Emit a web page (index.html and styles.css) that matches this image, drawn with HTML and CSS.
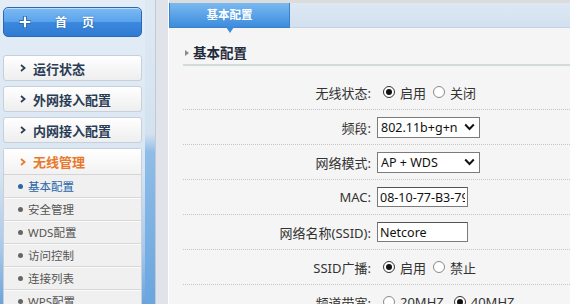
FILE: index.html
```html
<!DOCTYPE html>
<html lang="zh-CN">
<head>
<meta charset="utf-8">
<title>基本配置</title>
<link rel="stylesheet" href="styles.css">
</head>
<body>
<div class="page">
  <aside class="sidebar">
    <nav class="menu">
      <div class="home">
        <svg class="plus" width="12" height="12" viewBox="0 0 12 12"><path d="M6 1.5V10.5M1.5 6H10.5" stroke="#2a68b3" stroke-width="4.2" stroke-linecap="round" fill="none"/><path d="M6 1.5V10.5M1.5 6H10.5" stroke="#ffffff" stroke-width="2.2" stroke-linecap="round" fill="none"/></svg>
        <span class="home-text">首页</span>
      </div>
      <div class="item first"><svg class="chev" width="6" height="8" viewBox="0 0 6 8"><polyline points="1,1 4.6,4 1,7" fill="none" stroke="#2a3c55" stroke-width="1.7"/></svg>运行状态</div>
      <div class="item"><svg class="chev" width="6" height="8" viewBox="0 0 6 8"><polyline points="1,1 4.6,4 1,7" fill="none" stroke="#2a3c55" stroke-width="1.7"/></svg>外网接入配置</div>
      <div class="item"><svg class="chev" width="6" height="8" viewBox="0 0 6 8"><polyline points="1,1 4.6,4 1,7" fill="none" stroke="#2a3c55" stroke-width="1.7"/></svg>内网接入配置</div>
      <div class="group">
        <div class="group-head"><svg class="chev" width="6" height="8" viewBox="0 0 6 8"><polyline points="1,1 4.6,4 1,7" fill="none" stroke="#e9782a" stroke-width="1.7"/></svg>无线管理</div>
        <div class="sub active"><span class="dot"></span>基本配置</div>
        <div class="sub"><span class="dot"></span>安全管理</div>
        <div class="sub"><span class="dot"></span>WDS配置</div>
        <div class="sub"><span class="dot"></span>访问控制</div>
        <div class="sub"><span class="dot"></span>连接列表</div>
        <div class="sub"><span class="dot"></span>WPS配置</div>
      </div>
    </nav>
    <div class="edge"></div>
  </aside>
  <div class="divider"></div>
  <main class="content">
    <div class="tabbar"><div class="tab">基本配置</div></div>
    <section class="panel">
      <h2 class="heading"><span class="tri"></span>基本配置</h2>
      <div class="form">
        <div class="row">
          <div class="label">无线状态:</div>
          <div class="radios"><span class="radio on"></span><span class="opt">启用</span><span class="radio"></span><span class="opt">关闭</span></div>
        </div>
        <div class="row">
          <div class="label">频段:</div>
          <div class="select"><span>802.11b+g+n</span><svg width="11" height="8" viewBox="0 0 11 8"><polyline points="1.2,1.5 5.5,6 9.8,1.5" fill="none" stroke="#111" stroke-width="1.9"/></svg></div>
        </div>
        <div class="row">
          <div class="label">网络模式:</div>
          <div class="select"><span>AP + WDS</span><svg width="11" height="8" viewBox="0 0 11 8"><polyline points="1.2,1.5 5.5,6 9.8,1.5" fill="none" stroke="#111" stroke-width="1.9"/></svg></div>
        </div>
        <div class="row">
          <div class="label">MAC:</div>
          <div><input class="input" type="text" value="08-10-77-B3-79"></div>
        </div>
        <div class="row">
          <div class="label">网络名称(SSID):</div>
          <div><input class="input" type="text" value="Netcore"></div>
        </div>
        <div class="row">
          <div class="label">SSID广播:</div>
          <div class="radios"><span class="radio on"></span><span class="opt">启用</span><span class="radio"></span><span class="opt">禁止</span></div>
        </div>
        <div class="row">
          <div class="label">频道带宽:</div>
          <div class="radios"><span class="radio"></span><span class="opt wide">20MHZ</span><span class="radio on"></span><span class="opt">40MHZ</span></div>
        </div>
      </div>
    </section>
  </main>
</div>
</body>
</html>
```

FILE: styles.css
```css
html, body {
  margin: 0;
  padding: 0;
}
body {
  width: 570px;
  height: 304px;
  overflow: hidden;
  font-family: "Noto Sans", "Noto Sans CJK SC", sans-serif;
  background: #f5f5f5;
}
.page {
  display: flex;
  height: 304px;
}

/* sidebar */
.sidebar {
  width: 155px;
  flex: none;
  display: flex;
  background: linear-gradient(to bottom, #e4edf6 0%, #d9e6f2 55%, #a9c9e9 82%, #6aa3db 100%);
}
.menu {
  width: 139px;
  margin-left: 3px;
  display: flex;
  flex-direction: column;
}
.edge {
  flex: 1;
  margin-left: 3px;
  background: linear-gradient(to bottom, #dfe9f4 0%, #d3e2f0 44%, #8fbde7 50%, #6aa5df 100%);
}
.home {
  margin-top: 7px;
  height: 30px;
  flex: none;
  box-sizing: border-box;
  border: 1px solid #2a68b3;
  border-radius: 5px;
  background: linear-gradient(to bottom, #7cbaf2 0%, #5ba4ec 48%, #3b89de 52%, #2f7bd2 100%);
  box-shadow: inset 0 1px 0 rgba(255,255,255,0.5);
  display: flex;
  align-items: center;
  padding-left: 15px;
  color: #fff;
  font-weight: bold;
  font-size: 12px;
}
.plus {
  flex: none;
}
.home-text {
  margin-left: 24px;
  letter-spacing: 15px;
  text-shadow: 0 0 2px rgba(20,70,140,0.6);
}
.item {
  margin-top: 5px;
  height: 26px;
  flex: none;
  box-sizing: border-box;
  border: 1px solid #c5d0dc;
  border-radius: 3px;
  background: linear-gradient(to bottom, #ffffff, #eeeeee);
  display: flex;
  align-items: center;
  padding-left: 16px;
  font-size: 13px;
  font-weight: bold;
  color: #2a3c55;
}
.item.first {
  margin-top: 18px;
}
.chev {
  flex: none;
  margin-right: 7px;
}
.group {
  margin-top: 5px;
  flex: 1;
  border: 1px solid #c5d0dc;
  border-bottom: none;
  border-radius: 3px 3px 0 0;
  background: #f0f0f0;
}
.group-head {
  height: 26px;
  box-sizing: border-box;
  display: flex;
  align-items: center;
  padding-left: 16px;
  color: #e9782a;
  font-weight: bold;
  font-size: 13px;
  border-bottom: 1px solid #d4d4d4;
  background: linear-gradient(to bottom, #ffffff, #f2f2f2);
}
.sub {
  height: 23px;
  box-sizing: border-box;
  border-bottom: 1px solid #d8d8d8;
  box-shadow: 0 1px 0 #fafafa;
  display: flex;
  align-items: center;
  padding-left: 14px;
  font-size: 11.5px;
  color: #555;
}
.dot {
  width: 5px;
  height: 5px;
  border-radius: 50%;
  background: #666;
  margin-right: 5px;
  flex: none;
}
.sub.active {
  color: #2a67a6;
}
.sub.active .dot {
  background: #2a67a6;
}

/* divider */
.divider {
  width: 14px;
  flex: none;
  box-sizing: border-box;
  background: #e0e3ea;
  border-left: 1px solid #c4cad4;
  border-right: 1px solid #ffffff;
}

/* content */
.content {
  flex: 1;
  min-width: 0;
  background: #f5f5f5;
  display: flex;
  flex-direction: column;
}
.tabbar {
  height: 28px;
  flex: none;
  box-sizing: border-box;
  border-top: 3px solid #dcdcdc;
  border-bottom: 1px solid #c4d2e1;
  background: linear-gradient(to bottom, #dde8f4, #d2e0ef);
}
.tab {
  position: relative;
  width: 121px;
  height: 25px;
  box-sizing: border-box;
  border: 1px solid #3a82cc;
  border-top: none;
  background: linear-gradient(to bottom, #7ab9ef 0%, #5aa3e8 50%, #3d8bdb 100%);
  color: #fff;
  font-size: 11.5px;
  font-weight: bold;
  text-align: center;
  line-height: 23px;
}
.tab::after {
  content: "";
  position: absolute;
  left: 50%;
  bottom: -6px;
  margin-left: -4px;
  border-left: 4px solid transparent;
  border-right: 4px solid transparent;
  border-top: 6px solid #3d8bdb;
}
.panel {
  padding: 16px 0 0 14px;
}
.heading {
  margin: 0;
  font-size: 13.5px;
  font-weight: bold;
  color: #1f2b3b;
  line-height: 18px;
  padding-bottom: 2px;
  border-bottom: 2px solid #d3dbd7;
  display: flex;
  align-items: center;
}
.tri {
  width: 0;
  height: 0;
  border-left: 4px solid #8a8a8a;
  border-top: 3.5px solid transparent;
  border-bottom: 3.5px solid transparent;
  margin: 0 4px 0 2px;
}
.form {
  margin-top: 9px;
}
.row {
  display: grid;
  grid-template-columns: 188px auto;
  column-gap: 6px;
  align-items: center;
  height: 35px;
  box-sizing: border-box;
  border-bottom: 1px dotted #c6c6c6;
}
.label {
  text-align: right;
  font-size: 13px;
  color: #333;
  white-space: nowrap;
}
.select {
  width: 103px;
  height: 21px;
  box-sizing: border-box;
  border: 1px solid #7b7b7b;
  background: #fff;
  display: flex;
  align-items: center;
  justify-content: space-between;
  padding: 0 4px 0 3px;
  font-size: 12.5px;
  color: #111;
}
.input {
  display: block;
  width: 91px;
  height: 20px;
  box-sizing: border-box;
  margin: 0;
  border: 1px solid #7b7b7b;
  border-top-color: #555;
  background: #fff;
  font-family: "Noto Sans", "Noto Sans CJK SC", sans-serif;
  font-size: 12.5px;
  color: #111;
  padding: 0 2px;
  outline: none;
}
.radios {
  display: flex;
  align-items: center;
  padding-left: 6px;
  font-size: 13px;
  color: #333;
}
.radio {
  width: 12px;
  height: 12px;
  box-sizing: border-box;
  border: 1px solid #8a8a8a;
  border-radius: 50%;
  background: #fff;
  position: relative;
  margin-right: 5px;
  flex: none;
}
.radio.on {
  border-color: #333;
}
.radio.on::after {
  content: "";
  position: absolute;
  left: 2px;
  top: 2px;
  width: 6px;
  height: 6px;
  border-radius: 50%;
  background: #111;
}
.opt {
  margin-right: 7px;
}
.opt.wide {
  margin-right: 10px;
}
```
